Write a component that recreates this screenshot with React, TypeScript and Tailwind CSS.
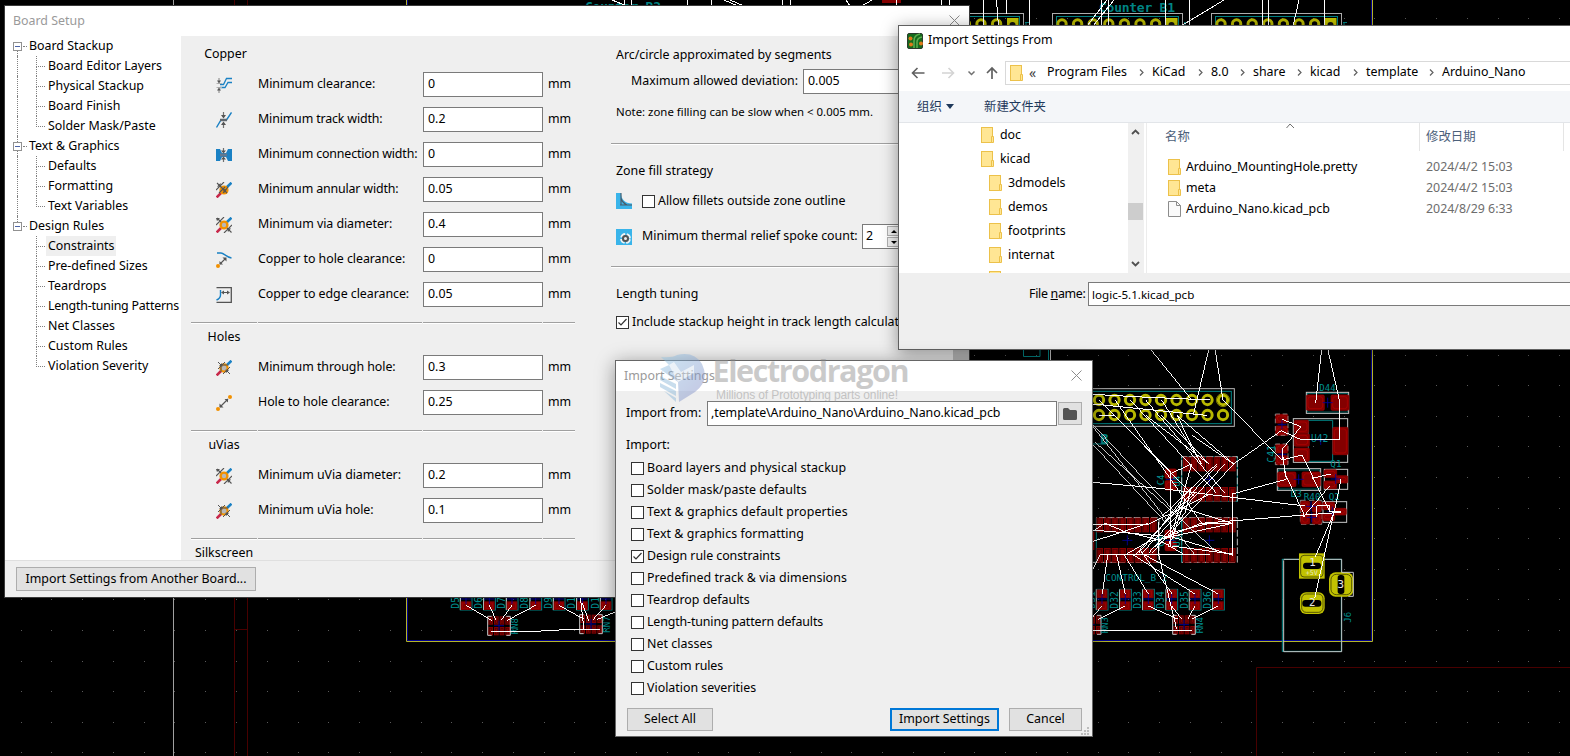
import React from "react";

const pads = (n: number, from: number, step: number) =>
  Array.from({ length: n }, (_, i) => from + i * step);

const Chip = ({ x, y, n = 6, h = 44, step = 23 }: { x: number; y: number; n?: number; h?: number; step?: number }) => (
  <g>
    {pads(n, x, step).map((px) => (
      <g key={px}>
        <rect x={px} y={y} width={step - 3} height={h} fill="#840000" />
        <rect x={px + 4} y={y + 4} width={step - 11} height={h - 8} fill="none" stroke="#4a0000" strokeWidth="2" />
      </g>
    ))}
  </g>
);

const Smd = ({ x, y, w, h }: { x: number; y: number; w: number; h: number }) => (
  <g>
    <rect x={x} y={y} width={w} height={h} rx="4" fill="#840000" stroke="#9c0000" strokeWidth="2" />
    <rect x={x + 5} y={y + 5} width={w - 10} height={h - 10} rx="8" fill="none" stroke="#b80000" strokeWidth="2" />
  </g>
);

const Cross = ({ x, y, r = 15 }: { x: number; y: number; r?: number }) => (
  <path d={`M${x - r} ${y}h${2 * r}M${x} ${y - r}v${2 * r}`} stroke="#0000a0" strokeWidth="2.500" />
);

const Led = ({ x, y, label }: { x: number; y: number; label: string }) => (
  <g>
    <rect x={x - 17} y={y} width="35" height="62" fill="none" stroke="#008484" strokeWidth="3" />
    <path d={`M${x - 17} ${y}v62`} stroke="#c8c8c8" strokeWidth="3" />
    <rect x={x - 16} y={y} width="32" height="26" fill="#840000" />
    <rect x={x - 16} y={y + 36} width="32" height="26" fill="#840000" />
    <rect x={x - 10} y={y + 5} width="20" height="16" fill="none" stroke="#a80000" strokeWidth="2" />
    <rect x={x - 10} y={y + 41} width="20" height="16" fill="none" stroke="#a80000" strokeWidth="2" />
    <Cross x={x} y={y + 29} />
    <text transform={`translate(${x - 22} ${y + 58}) rotate(-90)`} fontSize="29" fill="#009090">{label}</text>
  </g>
);

const Header = ({ x }: { x: number }) => (
  <g>
    <rect x={x + 0.5} y="13.500" width="130" height="20" fill="none" stroke="#b0b0b0" />
    <rect x={x + 4.5} y="16.500" width="122" height="20" fill="none" stroke="#008484" />
    {pads(7, x + 10, 15.6).map((c) => (
      <circle key={c} cx={c} cy="24" r="4.2" fill="#000" stroke="#b8b800" strokeWidth="3" />
    ))}
    <rect x={x + 114} y="18" width="11.500" height="12" fill="#c2c200" />
    <circle cx={x + 119.5} cy="25" r="3" fill="#111" />
    <path d={`M${x + 132} 22.500h4M${x + 133} 22v3`} stroke="#008484" fill="none" />
  </g>
);

const NetArray = ({ x, y, label }: { x: number; y: number; label: string }) => (
  <g>
    <Chip x={x + 2} y={y} n={4} h={25} step={17} />
    <Chip x={x + 2} y={y + 32} n={4} h={25} step={17} />
    <path d={`M${x + 12} ${y}H${x}V${y + 57}H${x + 12}M${x + 56} ${y}H${x + 68}V${y + 57}H${x + 56}`} fill="none" stroke="#c8c8c8" strokeWidth="3" />
    <Cross x={x + 34} y={y + 28} />
    <text transform={`translate(${x + 90} ${y + 54}) rotate(-90)`} fontSize="27" fill="#009090">{label}</text>
  </g>
);

const dotXs = pads(52, -10.2, 30.77).map(Math.round);
const dotYs = pads(26, -12.6, 30.6).map(Math.round);

const Pcb = () => (
  <svg className="absolute inset-0" width="1570" height="756" fontFamily="DejaVu Sans Mono, Liberation Mono, monospace">
    {dotYs.map((y) => dotXs.map((x) => <rect key={`${x}-${y}`} x={x} y={y} width="1" height="1" fill="#5a5a5a" />))}
    <path d="M173.500 0V756" stroke="#a0a0a0" />
    <path d="M234.500 0V756M247.500 0V756M234 629.500H248M1256.500 756V667.500H1570" stroke="#480000" fill="none" />
    <path d="M407.500 0V640.500H1371.500V0" stroke="#000090" fill="none" />
    <path d="M406.500 0V641.500H1372.500V0" stroke="#b4b428" fill="none" />
    <text x="585" y="11" fontSize="13" fontWeight="bold" fill="#008484" textLength="76">Counter B2</text>
    <text x="1099" y="12" fontSize="13" fontWeight="bold" fill="#008484" textLength="76">Counter B1</text>
    <rect x="882" y="0" width="19" height="3" fill="#840000" />
    <Header x={893} />
    <Header x={1052} />
    <Header x={1211} />
    <path shapeRendering="crispEdges" d="M612 0l15 6M624 0V6M631 0V6M687.500 0V6M711.500 0V6M724 0l14 6M730 0l14 6M782.500 0V6M790.500 0V6M846 0l4 6M862 6l10-6M896.500 0V6M941.500 0V6M949.500 0V6M983.500 0V26M996.500 0l2 26M1006.500 0V14M1029.500 0V26M1087 26L1107 0M1093 26L1114 0M1101.500 0V26M1108.500 0V26M1165.500 0V26M1189.500 0V26M1181 26L1224 0M1262.500 0V26M1268.500 0V26M1299 0l-6 26M1324.500 0V26" stroke="#ffffff" fill="none" />
    <path d="M1023.500 345V356.500H1040V345M1048.500 345V362" stroke="#008484" fill="none" />
    <path d="M1050.500 345V362" stroke="#c8c8c8" />

    <g transform="translate(400 590) scale(.33333)">
      {[
        [198, "D5"], [268, "D6"], [336, "D7"], [407, "D8"], [477, "D9"], [547, "D10"], [618, "D11"],
      ].map(([x, l]) => (
        <Led key={l} x={Number(x)} y={-2} label={String(l)} />
      ))}
      <NetArray x={263} y={79} label="RN8" />
      <NetArray x={539} y={74} label="RN7" />
      <path shapeRendering="crispEdges" d="M198 46L277 92M268 46L288 90M336 46L304 90M407 46L320 92M272 124H404L477 120H600M477 46L553 88M541 20L552 118M547 40L566 92M618 46L578 90M655 62L592 88" stroke="#fff" strokeWidth="3" fill="none" />
    </g>

    <g transform="translate(1085 340) scale(.33333)">
      <rect x="-40" y="146" width="488" height="113" fill="none" stroke="#b8b8b8" strokeWidth="3" />
      <rect x="-40" y="154" width="479" height="97" fill="none" stroke="#008484" strokeWidth="3" />
      {[180, 225].map((y) =>
        pads(9, 42, 46.5).map((x) => (
          <circle key={`${x}-${y}`} cx={x} cy={y} r="14" fill="#000" stroke="#b8b800" strokeWidth="9" />
        )),
      )}
      <circle cx="414" cy="180" r="20" fill="none" stroke="#b8b800" strokeWidth="2" />
      <text x="46" y="312" fontSize="42" fontWeight="bold" fill="#008484">B</text>
      <path d="M22 312H70" stroke="#008484" strokeWidth="3" />

      <rect x="290" y="350" width="167" height="134" fill="none" stroke="#008484" strokeWidth="3" />
      <path d="M290 484V350H457V484M290 667V533H457V667H290M22 667H222V533H34" fill="none" stroke="#c0c0c0" strokeWidth="3" strokeDasharray="20 6" />
      <path d="M34 533V667M290 533V667" stroke="#008484" strokeWidth="3" />
      <Chip x={294} y={350} n={7} />
      <Chip x={294} y={441} n={7} />
      <Chip x={294} y={533} n={7} />
      <Chip x={294} y={624} n={7} />
      <Chip x={34} y={533} n={8} />
      <Chip x={34} y={624} n={8} />
      <rect x="2" y="575" width="26" height="55" fill="#840000" />
      <Cross x={373} y={418} />
      <Cross x={373} y={601} />
      <Cross x={127} y={601} />
      <Smd x={240} y={387} w={34} h={28} />
      <Smd x={240} y={422} w={34} h={28} />
      <Smd x={240} y={570} w={34} h={26} />
      <Smd x={240} y={604} w={34} h={28} />
      <Cross x={257} y={418} />
      <Cross x={257} y={601} />
      <text transform="translate(236 436) rotate(-90)" fontSize="27" fill="#009090">C4</text>
      <text transform="translate(286 440) rotate(-90)" fontSize="27" fill="#009090">U4</text>
      <text transform="translate(236 620) rotate(-90)" fontSize="27" fill="#009090">C3</text>
      <text transform="translate(284 620) rotate(-90)" fontSize="27" fill="#009090">U3</text>

      <rect x="664" y="157" width="127" height="63" fill="none" stroke="#c8c8c8" strokeWidth="3" />
      <rect x="667" y="161" width="121" height="55" fill="none" stroke="#008484" strokeWidth="2" />
      <Smd x={664} y={165} w={54} h={46} />
      <Smd x={738} y={165} w={54} h={46} />
      <Cross x={728} y={188} />
      <text x="703" y="152" fontSize="27" fill="#009090">D44</text>

      <rect x="625" y="236" width="163" height="131" fill="none" stroke="#c8c8c8" strokeWidth="3" />
      <path d="M670 241H743V364H670Z" fill="none" stroke="#008484" strokeWidth="3" />
      <Smd x={628} y={241} w={43} h={38} />
      <Smd x={628} y={281} w={45} h={38} />
      <Smd x={628} y={324} w={45} h={40} />
      <Smd x={743} y={262} w={46} h={82} />
      <Cross x={707} y={300} />
      <text x="678" y="307" fontSize="29" fill="#009090">U42</text>
      <Smd x={572} y={223} w={37} h={26} />
      <Smd x={572} y={258} w={37} h={28} />
      <Smd x={572} y={313} w={37} h={26} />
      <Smd x={572} y={347} w={37} h={27} />
      <rect x="571" y="222" width="38" height="64" fill="none" stroke="#b0b0b0" strokeWidth="2" strokeDasharray="14 8" />
      <rect x="571" y="312" width="38" height="62" fill="none" stroke="#b0b0b0" strokeWidth="2" strokeDasharray="14 8" />
      <Cross x={591} y={254} r={13} />
      <Cross x={591} y={343} r={13} />
      <text transform="translate(571 368) rotate(-90)" fontSize="29" fill="#009090">C41</text>

      <rect x="577" y="386" width="130" height="65" fill="none" stroke="#c8c8c8" strokeWidth="3" />
      <rect x="580" y="390" width="124" height="57" fill="none" stroke="#008484" strokeWidth="2" />
      <Smd x={578} y={396} w={55} h={44} />
      <Smd x={651} y={396} w={55} h={44} />
      <Cross x={641} y={418} />
      <rect x="718" y="388" width="70" height="60" fill="none" stroke="#c8c8c8" strokeWidth="3" />
      <Smd x={717} y={389} w={38} h={23} />
      <Smd x={717} y={423} w={38} h={23} />
      <Smd x={754} y={407} w={34} h={22} />
      <Cross x={752} y={417} />
      <text x="736" y="382" fontSize="28" fill="#009090">Q1</text>
      <text x="617" y="472" fontSize="28" fill="#009090">D3</text>
      <text x="656" y="480" fontSize="28" fill="#009090">R40</text>
      <text x="731" y="480" fontSize="28" fill="#009090">Q2</text>
      <rect x="646" y="481" width="64" height="72" fill="none" stroke="#c8c8c8" strokeWidth="2" strokeDasharray="16 10" />
      <Smd x={647} y={484} w={27} h={32} />
      <Smd x={682} y={484} w={27} h={32} />
      <Smd x={647} y={520} w={27} h={32} />
      <Smd x={682} y={520} w={27} h={32} />
      <Cross x={678} y={499} />
      <Cross x={680} y={532} />
      <rect x="714" y="485" width="71" height="62" fill="none" stroke="#c8c8c8" strokeWidth="3" />
      <Smd x={713} y={487} w={36} h={22} />
      <Smd x={713} y={520} w={36} h={22} />
      <Smd x={750} y={505} w={34} h={20} />
      <Cross x={742} y={515} />

      <rect x="592" y="658" width="177" height="276" fill="none" stroke="#008484" strokeWidth="3" />
      <path d="M596 661V935H770V658H596" fill="none" stroke="#c8c8c8" strokeWidth="3" />
      <rect x="642" y="640" width="77" height="76" fill="#c2c200" />
      <rect x="647" y="646" width="67" height="65" rx="10" fill="none" stroke="#222200" strokeWidth="2" />
      <rect x="654" y="668" width="54" height="19" rx="9" fill="#000" />
      <rect x="645" y="757" width="74" height="65" rx="18" fill="#c2c200" />
      <rect x="650" y="762" width="64" height="55" rx="14" fill="none" stroke="#222200" strokeWidth="2" />
      <rect x="652" y="780" width="57" height="20" rx="9" fill="#000" />
      <rect x="732" y="697" width="73" height="73" rx="20" fill="#c2c200" />
      <rect x="738" y="703" width="62" height="61" rx="16" fill="none" stroke="#222200" strokeWidth="2" />
      <path d="M770 697H805V769H790" fill="none" stroke="#c8c8c8" strokeWidth="3" />
      <rect x="758" y="705" width="20" height="57" rx="8" fill="#000" />
      <text x="673" y="678" fontSize="32" fill="#e8e8e8">1</text>
      <text x="662" y="704" fontSize="20" fill="#e8e8c0">+5V</text>
      <text x="672" y="797" fontSize="32" fill="#e8e8e8">2</text>
      <text x="757" y="743" fontSize="34" fill="#e8e8e8">3</text>
      <text transform="translate(797 848) rotate(-90)" fontSize="27" fill="#009090">J6</text>

      <text x="61" y="722" fontSize="28" fill="#009090" textLength="186">CONTROL_B_2</text>
      {[
        [51, "D31"], [121, "D32"], [190, "D33"], [260, "D34"], [330, "D35"], [400, "D36"],
      ].map(([x, l]) => (
        <Led key={l} x={Number(x)} y={748} label={String(l)} />
      ))}
      <NetArray x={-20} y={826} label="RN3" />
      <NetArray x={263} y={826} label="RN4" />

      <g stroke="#fff" strokeWidth="3" fill="none" shapeRendering="crispEdges">
        <path d="M195 26L318 177M372 26L325 224M390 26L414 180L591 360M710 26L692 190M728 26L763 180V300H650L589 272L446 372M22 163L170 171L375 180M22 192L365 226" />
        <path d="M42 226H88L328 470M42 180L330 470M90 180L350 550M136 180L395 460M182 180L420 460M182 226L372 372M230 180L350 372M230 226L373 372M276 226L348 372M276 226L446 372M320 285L446 372" />
        <path d="M22 252L302 550M22 258L330 645M22 312L240 545M30 306L400 640" stroke="#d0d0d0" />
        <path d="M22 427L206 443L442 472L660 498M22 553H190L262 518L373 463M22 570L257 590L442 645M442 460V648M442 462L604 418M348 550L660 525L768 517M258 395V620M222 545V640M258 400L320 372L250 620M230 530L395 372M395 378L150 645M420 372L170 640M446 372L200 640M22 605L190 550M22 575L60 550L120 575L222 600L300 645M260 618L440 642M22 690L45 645H375M280 500L442 550L190 605L120 645" />
        <path d="M68 645L52 762M95 645L121 762M118 645L190 762M145 645L330 762M170 640L400 762M165 630L262 762M220 640L275 868M51 798L22 832M121 798L40 838M190 798L280 838M260 798L290 838M330 798L308 838M400 798L322 836M22 871H320" />
        <path d="M591 238L648 260L591 328L600 400L660 530M591 360L651 345L735 517M604 418L592 345M680 415L738 402M768 418L748 515L691 650M745 525L689 775M735 437L655 530M695 498H735V515H768M695 498V530" />
        <path d="M240 545L320 440L300 520L190 640M330 460L230 560L160 640M300 480L260 600M222 600L348 550L442 550M210 620L270 575L373 550" />
      </g>
    </g>
  </svg>
);

/* ---------- shared widgets ---------- */

const Check = ({ on = false }: { on?: boolean }) => (
  <span className="flex size-[13px] shrink-0 items-center justify-center border border-[#333] bg-white">
    {on && (
      <svg width="11" height="11" viewBox="0 0 11 11">
        <path d="M1.500 5.500L4 8L9.500 2" stroke="#333" strokeWidth="1.200" fill="none" />
      </svg>
    )}
  </span>
);

const Field = ({ value, className }: { value: string; className: string }) => (
  <div className={`flex h-[25px] shrink-0 items-center border border-[#7a7a7a] bg-white pl-1 ${className}`}>{value}</div>
);

const Close = () => (
  <svg width="11" height="11" viewBox="0 0 11 11" className="-mt-px">
    <path d="M.5 .5L10.500 10.500M10.500 .5L.5 10.500" stroke="#8c8c8c" fill="none" />
  </svg>
);

const HLine = () => <div className="h-[2px] border-b border-white bg-[#a0a0a0]" />;

/* ---------- rule icons ---------- */

const Heads = ({ d }: { d: string }) => <path d={d} fill="#545454" />;

const icons: Record<string, React.ReactNode> = {
  clearance: (
    <>
      <path d="M4 7.500H7.500L10.500 1.500H16M4 10.500H9L12 5.500H16" stroke="#1a81c4" strokeWidth="1.300" fill="none" />
      <path d="M.500 6.500H6M.500 10.500H6" stroke="#b0b0b0" />
      <path d="M3 1V5M3 12V16" stroke="#808080" />
      <Heads d="M1 3.500H5L3 6.500ZM1 13.500H5L3 10.500Z" />
    </>
  ),
  track: (
    <>
      <path d="M.500 15.500L5 8H10.500L15.500 .500" stroke="#1a81c4" strokeWidth="1.400" fill="none" />
      <path d="M4 8H11" stroke="#606870" strokeWidth="2.500" />
      <path d="M7.500 0V5M7.500 11V16" stroke="#707070" strokeWidth="1.200" />
      <Heads d="M5 3H10L7.500 6.500ZM5 13H10L7.500 9.500Z" />
    </>
  ),
  connection: (
    <>
      <path d="M0 2H4L6 6H10L12 2H16V14H12L10 10H6L4 14H0Z" fill="#1a81c4" />
      <path d="M4 8H11" stroke="#607890" strokeWidth="3" />
      <path d="M7.500 1V5M7.500 11V15" stroke="#707070" strokeWidth="1.200" />
      <Heads d="M5 3.500H10L7.500 6.500ZM5 12.500H10L7.500 9.500Z" />
    </>
  ),
  annular: (
    <>
      <path d="M10 6L15.500 .700" stroke="#1a81c4" strokeWidth="2.600" />
      <path d="M.600 15.400L5 11" stroke="#c8284a" strokeWidth="2.600" />
      <circle cx="8" cy="8" r="4.600" fill="#f29100" />
      <path d="M0 8L8 0M7 11L12 5M1 1L11 11M3 11L9 5" stroke="#545454" strokeWidth="1.100" />
      <Heads d="M1 4.500L5 5L4.500 1ZM7 7L11 7.500L8 11Z" />
    </>
  ),
  via: (
    <>
      <path d="M10 6L15.500 .700" stroke="#1a81c4" strokeWidth="2.600" />
      <path d="M.600 15.400L5 11" stroke="#c8284a" strokeWidth="2.600" />
      <circle cx="8" cy="8" r="3.400" fill="#b8b8b8" stroke="#f29100" strokeWidth="2.400" />
      <path d="M0 8L8 0M8 16L16 8M1 1L5 5M11 11L15.500 15.500" stroke="#545454" strokeWidth="1.100" />
      <Heads d="M0 1L4 1L1 4ZM11 11L15 11.500L12 15Z" />
    </>
  ),
  hole: (
    <>
      <path d="M10 6L15.500 .700" stroke="#1a81c4" strokeWidth="2.600" />
      <path d="M.600 15.400L5 11" stroke="#c8284a" strokeWidth="2.600" />
      <circle cx="8" cy="8" r="3.600" fill="#b8b8b8" stroke="#f29100" strokeWidth="2.200" />
      <path d="M2 9L9 2M7 14L14 7M2 2L6 6M10 10L14 14M5 4V12M4 5H12" stroke="#545454" strokeWidth="1" fill="none" />
      <Heads d="M3 6L6.500 6.500L6 3ZM10 13L9.500 9.500L13 10Z" />
    </>
  ),
  copperHole: (
    <>
      <path d="M1 1H5C8 1 10 5 15.500 6" stroke="#1a81c4" strokeWidth="1.400" fill="none" />
      <path d="M4 12L9.500 6.500" stroke="#545454" strokeWidth="1.100" />
      <Heads d="M6.500 5.500H10.500V9.500ZM3.500 9V12.500H7Z" />
      <circle cx="2" cy="14" r="2" fill="#f29100" />
    </>
  ),
  copperEdge: (
    <>
      <path d="M.500 .700H15.300V15.300H.500" stroke="#545454" strokeWidth="1.300" fill="none" />
      <path d="M4.500 3V8C4.500 11 3 12 .500 13" stroke="#1a81c4" strokeWidth="1.400" fill="none" />
      <path d="M6 5.500H13" stroke="#545454" />
      <Heads d="M5 5.500L8 3.500V7.500ZM14 5.500L11 3.500V7.500Z" />
    </>
  ),
  holeHole: (
    <>
      <path d="M4 12L12 4" stroke="#545454" strokeWidth="1.100" />
      <Heads d="M8.500 4H12V7.500ZM3.500 8.500V12.500H7.500Z" />
      <circle cx="2" cy="14" r="2" fill="#f29100" />
      <circle cx="14" cy="2" r="2" fill="#f29100" />
    </>
  ),
  fillet: (
    <>
      <path d="M0 0H5C5 6 9 10.500 16 10.500V16H0Z" fill="#39b4ea" />
      <path d="M5 0V12M4 12H16M5 5C6 9 8 10.500 11 12" stroke="#4a5a66" strokeWidth="1.100" fill="none" />
    </>
  ),
  thermal: (
    <>
      <rect width="16" height="16" fill="#39b4ea" />
      <circle cx="9.500" cy="9.500" r="4.500" fill="none" stroke="#f2f2f2" strokeWidth="1.800" strokeDasharray="5.400 1.670" strokeDashoffset="-.8" />
      <circle cx="9.500" cy="9.500" r="2.500" fill="#eee" stroke="#545454" strokeWidth="2" />
    </>
  ),
};

const Icon = ({ name }: { name: string }) => (
  <svg width="16" height="16" viewBox="0 0 16 16" className="shrink-0">{icons[name]}</svg>
);

/* ---------- board setup ---------- */

const tree = [
  { title: "Board Stackup", items: ["Board Editor Layers", "Physical Stackup", "Board Finish", "Solder Mask/Paste"] },
  { title: "Text & Graphics", items: ["Defaults", "Formatting", "Text Variables"] },
  {
    title: "Design Rules",
    items: ["Constraints", "Pre-defined Sizes", "Teardrops", "Length-tuning Patterns", "Net Classes", "Custom Rules", "Violation Severity"],
  },
];

const Tree = () => (
  <div className="w-[176px] shrink-0 overflow-hidden bg-white">
    {tree.map((g, gi) => (
      <div key={g.title}>
        <div className="flex h-5">
          <div className="ml-[8px] w-[9px] shrink-0">
            <div className={`ml-1 h-[6px] border-l border-dotted ${gi > 0 ? "border-[#808080]" : "border-transparent"}`} />
            <div className="flex h-[9px] items-center border border-[#919191] bg-white px-px">
              <div className="h-px w-full bg-[#4b63a7]" />
            </div>
            <div className={`ml-1 h-[5px] border-l border-dotted ${gi < 2 ? "border-[#808080]" : "border-transparent"}`} />
          </div>
          <div className="mt-[10px] ml-px w-[4px] shrink-0 border-t border-dotted border-[#808080]" />
          <div className="ml-[2px] leading-5 whitespace-nowrap">{g.title}</div>
        </div>
        {g.items.map((it, i) => (
          <div key={it} className="flex h-5">
            <div className={`ml-[12px] w-[19px] shrink-0 border-l border-dotted ${gi < 2 ? "border-[#808080]" : "border-transparent"}`} />
            <div className="w-[9px] shrink-0">
              <div className="h-[11px] border-b border-l border-dotted border-[#808080]" />
              {i < g.items.length - 1 && <div className="h-[9px] border-l border-dotted border-[#808080]" />}
            </div>
            <div className={`ml-px shrink-0 px-[2px] leading-5 whitespace-nowrap ${it === "Constraints" ? "bg-[#efefef]" : ""} ${it === "Length-tuning Patterns" ? "tracking-[-0.2px]" : ""}`}>{it}</div>
          </div>
        ))}
      </div>
    ))}
  </div>
);

const sections = [
  {
    title: "Copper",
    rows: [
      ["clearance", "Minimum clearance:", "0"],
      ["track", "Minimum track width:", "0.2"],
      ["connection", "Minimum connection width:", "0"],
      ["annular", "Minimum annular width:", "0.05"],
      ["via", "Minimum via diameter:", "0.4"],
      ["copperHole", "Copper to hole clearance:", "0"],
      ["copperEdge", "Copper to edge clearance:", "0.05"],
    ],
  },
  { title: "Holes", rows: [["hole", "Minimum through hole:", "0.3"], ["holeHole", "Hole to hole clearance:", "0.25"]] },
  { title: "uVias", rows: [["via", "Minimum uVia diameter:", "0.2"], ["hole", "Minimum uVia hole:", "0.1"]] },
  { title: "Silkscreen", rows: [] },
];

const Rules = () => (
  <div className="w-[385px] shrink-0 overflow-hidden pt-[3px]">
    {sections.map((s, i) => (
      <div key={s.title}>
        {i > 0 && (
          <div className="mt-[15px] grid grid-cols-[66px_164px_119px_32px] gap-x-px">
            <HLine /><HLine /><HLine /><HLine />
          </div>
        )}
        <div className={`flex items-center justify-center ${i === 0 ? "h-[33px] w-[69px] pb-[3px]" : "h-[31px] w-[66px] pb-1"}`}>{s.title}</div>
        <div className="flex flex-col gap-[10px]">
          {s.rows.map(([icon, label, value]) => (
            <div key={label} className="flex h-[25px] items-center">
              <div className="ml-[25px] w-[42px] shrink-0"><Icon name={icon} /></div>
              <div className={`w-[165px] shrink-0 whitespace-nowrap ${label.endsWith("width:") ? "tracking-[-0.15px]" : "tracking-[-0.05px]"}`}>{label}</div>
              <Field value={value} className="w-[120px]" />
              <div className="ml-[5px]">mm</div>
            </div>
          ))}
        </div>
      </div>
    ))}
  </div>
);

const Zones = () => (
  <div className="w-[340px] shrink-0 overflow-hidden pt-[9px] pl-[40px] whitespace-nowrap">
    <div className="h-5 leading-5">Arc/circle approximated by segments</div>
    <div className="mt-1 flex h-[25px] items-center pl-[15px]">
      <span className="w-[172px] shrink-0">Maximum allowed deviation:</span>
      <Field value="0.005" className="w-[140px]" />
    </div>
    <div className="mt-[8px] h-5 text-[11.4px] leading-5">Note: zone filling can be slow when &lt; 0.005 mm.</div>
    <div className="mt-[21px] -ml-[5px]"><HLine /></div>
    <div className="mt-[16px] h-5 leading-5">Zone fill strategy</div>
    <div className="mt-[10px] flex h-5 items-center">
      <Icon name="fillet" />
      <span className="ml-[10px] flex items-center gap-[3px]"><Check />Allow fillets outside zone outline</span>
    </div>
    <div className="mt-[13px] flex h-[25px] items-center">
      <Icon name="thermal" />
      <span className="ml-[10px] w-[220px] shrink-0">Minimum thermal relief spoke count:</span>
      <div className="flex h-[25px] w-[52px] items-stretch border border-[#7a7a7a] bg-white">
        <span className="w-[24px] shrink-0 pl-[3px] leading-[22px]">2</span>
        <span className="flex w-[18px] shrink-0 flex-col gap-px py-px">
          <span className="flex flex-1 items-center border border-[#b0b0b0] bg-[#f0f0f0] pl-[3px]">
            <svg width="6" height="3"><path d="M0 3L3 0L6 3Z" fill="#000" /></svg>
          </span>
          <span className="flex flex-1 items-center border border-[#b0b0b0] bg-[#f0f0f0] pl-[3px]">
            <svg width="6" height="3"><path d="M0 0L3 3L6 0Z" fill="#000" /></svg>
          </span>
        </span>
      </div>
    </div>
    <div className="mt-[17px] -ml-[5px]"><HLine /></div>
    <div className="mt-[16px] h-5 leading-5">Length tuning</div>
    <div className="mt-[8px] flex h-5 items-center gap-[3px]"><Check on />Include stackup height in track length calculations</div>
  </div>
);

const BoardSetup = () => (
  <div className="absolute top-[5px] left-[4px] flex h-[593px] w-[966px] flex-col border border-[#3a3a3a] bg-[#efefef]">
    <div className="flex h-[30px] shrink-0 items-center justify-between bg-white pr-[9px] pl-[8px] text-[#9a9a9a]">
      <span>Board Setup</span>
      <Close />
    </div>
    <div className="flex h-[524px] shrink-0 overflow-hidden">
      <Tree />
      <div className="flex flex-1 overflow-hidden pl-[10px]">
        <Rules />
        <Zones />
      </div>
      <div className="h-full w-4 bg-[#c0c0c0]" />
    </div>
    <div className="flex-1 border-t border-[#dfdfdf] pt-[6px] pl-[11px]">
      <div className="flex h-6 w-[240px] items-center justify-center border border-[#adadad] bg-[#e1e1e1] whitespace-nowrap">
        Import Settings from Another Board...
      </div>
    </div>
  </div>
);

/* ---------- file chooser ---------- */

const Folder = () => (
  <svg width="13" height="16" viewBox="0 0 13 16" className="shrink-0">
    <rect x=".5" y=".5" width="11" height="15" fill="#ffe694" stroke="#ecc14a" />
    <path d="M10.500 9.500H12.500V15.500H10.500Z" fill="#ffe694" stroke="#ecc14a" />
  </svg>
);

const crumbs = [
  ["Program Files", "w-[105px]"],
  ["KiCad", "w-[59px]"],
  ["8.0", "w-[42px]"],
  ["share", "w-[57px]"],
  ["kicad", "w-[56px]"],
  ["template", "w-[76px]"],
  ["Arduino_Nano", "w-[100px]"],
];

const folders = [
  ["doc", "pl-[82px]"],
  ["kicad", "pl-[82px]"],
  ["3dmodels", "pl-[90px]"],
  ["demos", "pl-[90px]"],
  ["footprints", "pl-[90px]"],
  ["internat", "pl-[90px]"],
  ["", "pl-[90px]"],
];

const FileChooser = () => (
  <div className="absolute top-[25px] left-[898px] flex h-[325px] w-[680px] flex-col border border-[#606060] bg-white shadow-[0_3px_16px_rgba(0,0,0,0.4)]">
    <div className="flex h-[30px] shrink-0 items-center pb-px pl-[8px]">
      <svg width="16" height="16" viewBox="0 0 16 16">
        <rect x=".5" y=".5" width="15" height="15" rx="1.500" fill="#146b1c" stroke="#2c3a2c" />
        <path d="M7 15V8Q7 2 13 1M10 15V9Q10 5 15 4" stroke="#5fae50" strokeWidth="1.500" fill="none" />
        <circle cx="3.500" cy="5.500" r="2" fill="#e07a1a" />
        <circle cx="4" cy="11.500" r="2" fill="#e07a1a" />
        <circle cx="14" cy="10.500" r="2" fill="#e07a1a" />
      </svg>
      <span className="ml-[5px]">Import Settings From</span>
    </div>
    <div className="flex h-[35px] shrink-0 items-center pb-px">
      <svg width="106" height="24" viewBox="0 0 106 24" fill="none">
        <path d="M13.500 12H25.500M18.500 7L13.500 12L18.500 17" stroke="#606060" strokeWidth="1.600" />
        <path d="M43 12H54M49.500 7L54.500 12L49.500 17" stroke="#d4d4d4" strokeWidth="1.600" />
        <path d="M69.500 10.500L72.500 13.500L75.500 10.500" stroke="#707070" strokeWidth="1.500" />
        <path d="M93 18V7M88 12L93 7L98 12" stroke="#606060" strokeWidth="1.700" />
      </svg>
      <div className="flex h-[24px] flex-1 items-center border border-[#d9d9d9] pl-[4px]">
        <Folder />
        <span className="ml-[6px] w-[18px] pb-px text-[14px] text-[#444]">«</span>
        {crumbs.map(([c, w], i) => (
          <span key={c} className={`flex shrink-0 items-center pb-[2px] whitespace-nowrap ${w}`}>
            {c}
            {i < crumbs.length - 1 && (
              <svg width="5" height="7" viewBox="0 0 5 7" className="mt-px mr-[8px] ml-auto">
                <path d="M1 .5L4 3.500L1 6.500" stroke="#606060" strokeWidth="1.200" fill="none" />
              </svg>
            )}
          </span>
        ))}
      </div>
    </div>
    <div className="flex h-[32px] shrink-0 items-center border-b border-[#e2e5e9] bg-[#f4f6f9] pt-px pl-[18px] text-[12.400px] text-[#1e395b]">
      <span className="w-[29px]">组织</span>
      <svg width="8" height="5" className="-mt-px"><path d="M0 0H8L4 5Z" fill="#1e395b" /></svg>
      <span className="ml-[30px]">新建文件夹</span>
    </div>
    <div className="flex h-[150px] shrink-0 overflow-hidden">
      <div className="flex w-[229px] shrink-0 flex-col">
        {folders.map(([f, p], i) => (
          <div key={i} className={`flex h-6 shrink-0 items-center gap-[6px] ${p}`}><Folder /><span className="pt-px">{f}</span></div>
        ))}
      </div>
      <div className="flex w-4 shrink-0 flex-col items-center bg-[#f0f0f0] pt-[6px] pr-px pb-[6px]">
        <svg width="9" height="6" fill="none"><path d="M1 5L4.500 1.500L8 5" stroke="#505050" strokeWidth="1.800" /></svg>
        <div className="mt-[68px] h-[17px] w-[15px] bg-[#cdcdcd]" />
        <svg width="9" height="6" fill="none" className="mt-auto"><path d="M1 1L4.500 4.500L8 1" stroke="#505050" strokeWidth="1.800" /></svg>
      </div>
      <div className="ml-[2px] flex-1 border-l border-[#ececec]">
        <div className="flex h-[28px] text-[#4c607a]">
          <div className="flex w-[273px] shrink-0 border-r border-[#e5e5e5] pl-[18px] leading-[27px]">
            <span className="w-[121px]">名称</span>
            <svg width="9" height="6" fill="none"><path d="M.500 5L4 1L8 5" stroke="#707070" /></svg>
          </div>
          <div className="w-[144px] shrink-0 border-r border-[#e5e5e5] pl-[6px] leading-[27px]">修改日期</div>
        </div>
        <div className="pt-[5px]">
          {[
            ["Arduino_MountingHole.pretty", "2024/4/2 15:03"],
            ["meta", "2024/4/2 15:03"],
            ["Arduino_Nano.kicad_pcb", "2024/8/29 6:33"],
          ].map(([n, d], i) => (
            <div key={n} className="flex h-[21px] items-center pl-[21px]">
              {i < 2 ? (
                <Folder />
              ) : (
                <svg width="13" height="16" viewBox="0 0 13 16">
                  <path d="M.5 .5H8.500L12.500 4.500V15.500H.5Z" fill="#fafafa" stroke="#8c8c8c" />
                  <path d="M8.500 .5V4.500H12.500" fill="none" stroke="#8c8c8c" />
                </svg>
              )}
              <span className={`ml-[5px] w-[240px] pt-[2px] ${i === 0 ? "tracking-[-0.1px]" : ""}`}>{n}</span>
              <span className="pt-[2px] text-[#6d6d6d]">{d}</span>
            </div>
          ))}
        </div>
      </div>
    </div>
    <div className="flex flex-1 items-start bg-[#efefef] pt-[9px]">
      <span className="w-[189px] pl-[130px] leading-6 tracking-[-0.3px] whitespace-nowrap">File <u>n</u>ame:</span>
      <div className="h-[24px] flex-1 border border-[#7a7a7a] bg-white pl-[3px] text-[11.600px] leading-[24px]">logic-5.1.kicad_pcb</div>
    </div>
  </div>
);

/* ---------- import dialog ---------- */

const options = [
  ["Board layers and physical stackup", "tracking-[0.08px]"],
  ["Solder mask/paste defaults", "tracking-[0.05px]"],
  ["Text & graphics default properties", "tracking-[0.11px]"],
  ["Text & graphics formatting", "tracking-[0.07px]"],
  ["Design rule constraints", "tracking-[-0.05px]"],
  ["Predefined track & via dimensions", "tracking-[0.05px]"],
  ["Teardrop defaults", "tracking-normal"],
  ["Length-tuning pattern defaults", "tracking-[-0.13px]"],
  ["Net classes", "tracking-[0.05px]"],
  ["Custom rules", "tracking-[-0.08px]"],
  ["Violation severities", "tracking-normal"],
];

const ImportDialog = () => (
  <div className="absolute top-[360px] left-[615px] flex h-[377px] w-[478px] flex-col border border-[#666] bg-[#efefef] shadow-[0_3px_18px_rgba(0,0,0,0.4)]">
    <div className="flex h-[30px] shrink-0 items-center justify-between bg-white pr-[10px] pl-[8px] text-[#9a9a9a]">
      <span>Import Settings</span>
      <Close />
    </div>
    <div className="mt-[10px] flex h-[25px] shrink-0 items-center pl-[10px]">
      <span className="w-[81px] shrink-0">Import from:</span>
      <div className="flex h-[25px] w-[350px] shrink-0 items-center border border-[#7a7a7a] bg-white pl-[3px] tracking-[-0.060px] whitespace-nowrap">
        ,template\Arduino_Nano\Arduino_Nano.kicad_pcb
      </div>
      <div className="ml-px flex h-[23px] w-[24px] items-center justify-center border border-[#adadad] bg-[#e1e1e1]">
        <svg width="14" height="12" viewBox="0 0 14 12"><path d="M0 1.500Q0 0 1.500 0H5L7 2H12.500Q14 2 14 3.500V10.500Q14 12 12.500 12H1.500Q0 12 0 10.500Z" fill="#545454" /></svg>
      </div>
    </div>
    <div className="mt-[9px] h-5 shrink-0 pl-[10px] leading-5">Import:</div>
    <div className="mt-[2px] pl-[15px]">
      {options.map(([o, t]) => (
        <div key={o} className="flex h-[22px] items-center gap-[3px]">
          <Check on={o === "Design rule constraints"} />
          <span className={`pt-px ${t}`}>{o}</span>
        </div>
      ))}
    </div>
    <div className="mt-[9px] flex h-[23px] shrink-0 items-stretch pr-[10px] pl-[11px]">
      <div className="flex w-[86px] items-center justify-center border border-[#adadad] bg-[#e1e1e1]">Select All</div>
      <div className="ml-auto flex w-[109px] items-center justify-center border-2 border-[#0078d7] bg-[#e1e1e1]">Import Settings</div>
      <div className="ml-[10px] flex w-[73px] items-center justify-center border border-[#adadad] bg-[#e1e1e1]">Cancel</div>
    </div>
    <svg width="9" height="9" className="-mt-[4px] mr-[2px] ml-auto shrink-0" fill="#bdbdbd">
      <path d="M6 0h2v2h-2zM3 3h2v2h-2zM6 3h2v2h-2zM0 6h2v2h-2zM3 6h2v2h-2zM6 6h2v2h-2z" />
    </svg>
  </div>
);

const Watermark = () => (
  <svg className="absolute top-[345px] left-[650px]" width="270" height="65" viewBox="0 0 270 65">
    <defs>
      <linearGradient id="wm" x1="0" y1="0" x2="1" y2="1">
        <stop offset="0" stopColor="#8fc8e6" />
        <stop offset="1" stopColor="#7a80c0" />
      </linearGradient>
    </defs>
    <g opacity="0.450">
      <path d="M11 12Q22 13 27 10Q44 6 52 19Q60 36 45 47L29 57L28 37L10 24L19 20Z" fill="url(#wm)" />
      <path d="M10 31L26 39V44L10 35ZM10 38L26 46V51L10 42ZM14 46L26 53V57Z" fill="#86b4d8" />
      <path d="M19 20L28 37L44 28V20L31 27L24 17Z" fill="#e8f0f6" opacity="0.800" />
    </g>
    <text x="62.500" y="37" fontSize="30.500" fontWeight="700" fontFamily="Open Sans, sans-serif" fill="#8c8c8c" opacity="0.450" textLength="197">Electrodragon</text>
    <text x="66" y="54" fontSize="12" fontFamily="Liberation Sans, sans-serif" fill="#8c8c8c" opacity="0.450" textLength="182">Millions of Prototyping parts online!</text>
  </svg>
);

export default function App() {
  return (
    <div className="relative h-[756px] w-[1570px] overflow-hidden bg-black font-['Noto_Sans','Noto_Sans_CJK_SC',sans-serif] text-[12.4px] leading-none text-black">
      <Pcb />
      <BoardSetup />
      <FileChooser />
      <ImportDialog />
      <Watermark />
    </div>
  );
}
